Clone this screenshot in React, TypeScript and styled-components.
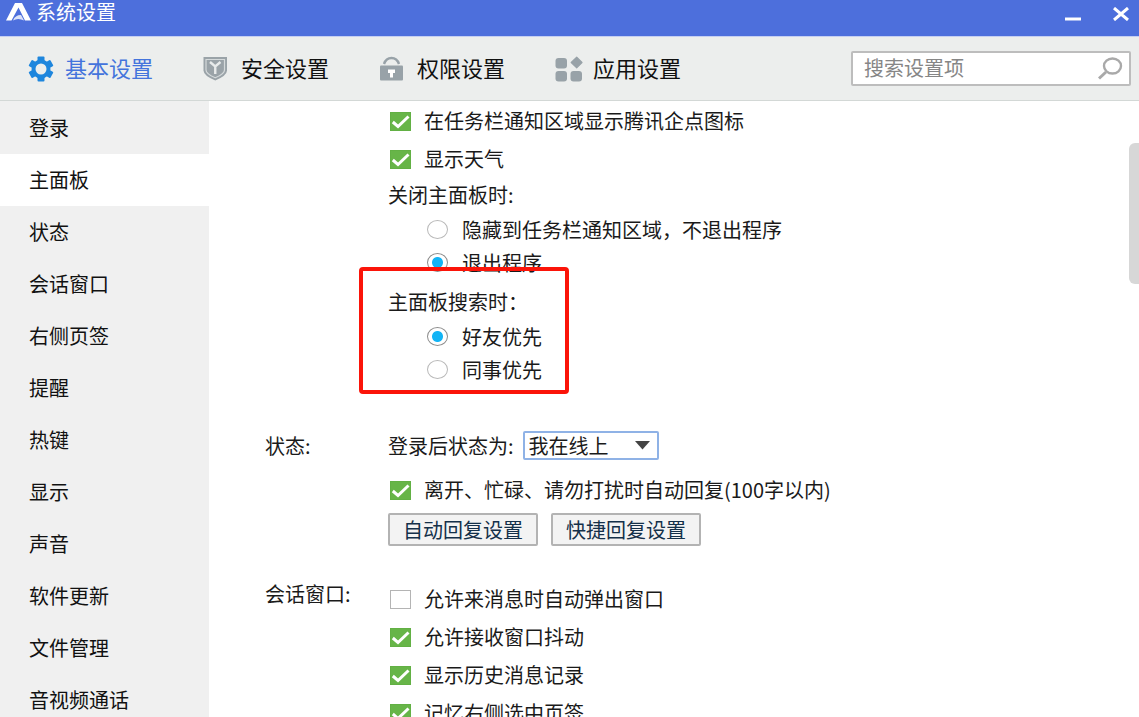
import React from "react";
import styled, { createGlobalStyle, css } from "styled-components";

const GlobalStyle = createGlobalStyle`
  *, *::before, *::after { box-sizing: border-box; }
  body {
    margin: 0;
    background: #fff;
    color: #1a1a1a;
    font-family: "Noto Sans CJK SC", sans-serif;
    font-size: 20px;
  }
  button, input, select { font: inherit; color: inherit; }
`;

const Window = styled.div`
  display: flex;
  flex-direction: column;
  height: 100vh;
  overflow: hidden;
`;

const TitleBar = styled.header`
  flex: none;
  display: flex;
  justify-content: space-between;
  height: 37px;
  padding: 0 6px;
  background: #4d6fdc;
  border-bottom: 1px solid #c5cff2;
  color: #fff;
`;

const Brand = styled.h1`
  display: flex;
  align-items: center;
  gap: 5px;
  height: 24px;
  margin: 0;
  font-size: 20px;
  font-weight: 400;
  line-height: 24px;
`;

const WindowButtons = styled.div`
  display: flex;
  gap: 24px;
  height: 28px;
`;

const WindowButton = styled.button`
  display: flex;
  align-items: center;
  justify-content: center;
  width: 24px;
  padding: 0;
  border: 0;
  background: none;
`;

const Toolbar = styled.div`
  flex: none;
  display: flex;
  align-items: center;
  justify-content: space-between;
  height: 64px;
  padding: 0 8px 0 27px;
  background: #eceeed;
  border-bottom: 1px solid #d3d8d6;
`;

const Tabs = styled.nav`
  display: flex;
  gap: 48px;
`;

const Tab = styled.button<{ $active?: boolean }>`
  display: flex;
  align-items: flex-start;
  gap: 10px;
  width: 128px;
  padding: 0;
  border: 0;
  background: none;
  font-size: 22px;
  line-height: 22px;
  white-space: nowrap;
  color: ${(p) => (p.$active ? "#4474dc" : "#111")};
  svg { flex: none; }
`;

const SearchBox = styled.label`
  display: flex;
  align-items: center;
  width: 280px;
  height: 35px;
  padding: 0 6px 0 11px;
  border: 2px solid #bdbdbd;
  border-radius: 2px;
  background: #fff;
`;

const SearchInput = styled.input`
  flex: 1;
  min-width: 0;
  height: 31px;
  padding: 0 0 3px;
  border: 0;
  outline: 0;
  background: none;
  &::placeholder { color: #868686; opacity: 1; }
`;

const Body = styled.div`
  flex: 1;
  display: flex;
  min-height: 0;
`;

const Sidebar = styled.nav`
  flex: none;
  width: 209px;
  padding-top: 1px;
  background: #f0f0f0;
  overflow: hidden;
`;

const SideItem = styled.a<{ $active?: boolean }>`
  display: block;
  padding-left: 29px;
  line-height: 52px;
  color: #111;
  text-decoration: none;
  ${(p) => p.$active && css`background: #fff;`}
`;

const Content = styled.main`
  flex: 1;
  display: flex;
  flex-direction: column;
  gap: 34px;
  min-width: 0;
  padding: 1px 20px 0 56px;
  overflow: hidden;
`;

const Section = styled.section`
  flex: none;
  display: grid;
  grid-template-columns: 123px 1fr;
`;

const SectionTitle = styled.h2<{ $line: number }>`
  margin: 0;
  font-size: 20px;
  font-weight: 400;
  line-height: ${(p) => p.$line}px;
`;

const Group = styled.div`
  position: relative;
  margin-bottom: 6px;
  &:last-child { margin-bottom: 0; }
`;

const GroupTitle = styled.div`
  padding-bottom: 2px;
  line-height: 33px;
`;

const Highlight = styled.div`
  position: absolute;
  top: -18px;
  bottom: -8px;
  left: -29px;
  width: 210px;
  border: 4px solid #fb1409;
  border-radius: 4px;
  pointer-events: none;
`;

const CheckRow = styled.label`
  display: flex;
  align-items: center;
  gap: 13px;
  height: 38px;
  padding-left: 2px;
  white-space: nowrap;
`;

const Caption = styled.span`
  padding-bottom: 2px;
`;

const CheckMark = styled.span`
  display: grid;
  width: 21px;
  height: 19px;
  > * { grid-area: 1 / 1; }
  svg { pointer-events: none; }
`;

const CheckInput = styled.input`
  appearance: none;
  width: 21px;
  height: 19px;
  margin: 0;
  border: 1px solid #b4b4b4;
  background: #fff;
  &:checked { border-color: #62b044; background: #67b548; }
  & + svg { visibility: hidden; }
  &:checked + svg { visibility: visible; }
`;

const RadioRow = styled.label`
  display: flex;
  align-items: center;
  gap: 14px;
  height: 33px;
  padding-left: 39px;
  white-space: nowrap;
`;

const RadioInput = styled.input`
  appearance: none;
  width: 21px;
  height: 19px;
  margin: 0;
  border: 1px solid #b8b8b8;
  border-radius: 50%;
  background: #fff;
  &:checked {
    border-color: #8c8c8c;
    background: radial-gradient(circle, #12b4f5 5px, #fff 6px);
  }
`;

const StatusRow = styled.div`
  display: flex;
  align-items: center;
  gap: 9px;
  height: 51px;
`;

const SelectWrap = styled.span`
  position: relative;
  svg { position: absolute; right: 9px; top: 10px; pointer-events: none; }
`;

const Select = styled.select`
  appearance: none;
  display: block;
  width: 136px;
  height: 29px;
  padding: 0 28px 0 4px;
  border: 2px solid #8fb2e6;
  border-radius: 2px;
  background: #fff;
  line-height: 24px;
`;

const ButtonRow = styled.div`
  display: flex;
  gap: 13px;
  padding-top: 4px;
`;

const PushButton = styled.button`
  width: 150px;
  height: 33px;
  padding: 0;
  border: 2px solid #b3b3b3;
  border-radius: 2px;
  background: #f3f3f3;
  color: #14304a;
  line-height: 28px;
`;

const ScrollTrack = styled.div`
  flex: none;
  width: 10px;
  padding-top: 42px;
`;

const ScrollThumb = styled.div`
  height: 141px;
  border-radius: 6px 0 0 6px;
  background: #d7d7d7;
`;

function Check({ label, checked }: { label: string; checked?: boolean }) {
  return (
    <CheckRow>
      <CheckMark>
        <CheckInput type="checkbox" defaultChecked={checked} />
        <svg width="21" height="19" viewBox="0 0 21 19" aria-hidden="true">
          <path d="M2.8 10 L8 14.5 L18.5 4.5" fill="none" stroke="#fff" strokeWidth="3" />
        </svg>
      </CheckMark>
      <Caption>{label}</Caption>
    </CheckRow>
  );
}

function Radio({ name, label, checked }: { name: string; label: string; checked?: boolean }) {
  return (
    <RadioRow>
      <RadioInput type="radio" name={name} defaultChecked={checked} />
      {label}
    </RadioRow>
  );
}

const GearIcon = () => (
  <svg width="28" height="26" viewBox="0 0 28 26">
    <g fill="#1e86dd">
      {[0, 60, 120].map((a) => (
        <rect key={a} x="10.5" y="0.5" width="7" height="25" rx="1" transform={`rotate(${a} 14 13)`} />
      ))}
      <circle cx="14" cy="13" r="9.5" />
    </g>
    <circle cx="14" cy="13" r="5.5" fill="#eceeed" />
  </svg>
);

const ShieldIcon = () => (
  <svg width="28" height="26" viewBox="0 0 28 26">
    <path d="M0.5 1H24V14.500Q24 19.500 12.250 24.500Q0.500 19.500 0.500 14.500Z" fill="#9aa3a8" />
    <path d="M3 3.500H21.500V14Q21.500 18 12.250 21.800Q3 18 3 14Z" fill="none" stroke="#d5dadb" strokeWidth="1.2" />
    <path d="M7 6L12.250 10.500L17.500 6M12.250 10.500V18" fill="none" stroke="#e8ebeb" strokeWidth="2.400" />
  </svg>
);

const LockIcon = () => (
  <svg width="28" height="26" viewBox="0 0 28 26">
    <path d="M5 8Q7 2 12.500 2Q18 2 20 8" fill="none" stroke="#98a2a8" strokeWidth="2.400" />
    <rect x="1" y="9.500" width="23" height="15" rx="1" fill="#98a2a8" />
    <path d="M9 13.500H16V17H14V21.500H11V17H9Z" fill="#fff" />
  </svg>
);

const AppsIcon = () => (
  <svg width="28" height="26" viewBox="0 0 28 26">
    <g fill="#98a2a8">
      <rect x="0.5" y="2" width="11.500" height="10.500" rx="3" />
      <rect x="0.5" y="15" width="11.500" height="10.500" rx="3" />
      <rect x="15.500" y="15" width="11.500" height="10.500" rx="3" />
      <path d="M21.700 1.200L27 6.500L21.700 11.800L16.200 6.500Z" stroke="#98a2a8" strokeWidth="1.200" strokeLinejoin="round" />
    </g>
  </svg>
);

const SIDE = ["登录", "主面板", "状态", "会话窗口", "右侧页签", "提醒", "热键", "显示", "声音", "软件更新", "文件管理", "音视频通话"];

export default function App() {
  return (
    <>
      <GlobalStyle />
      <Window>
        <TitleBar>
          <Brand>
            <svg width="25" height="18" viewBox="0 0 25 18" fill="#fff">
              <path d="M0 17.500L9 0H16L25 17.500H19L12.500 4.500L5.500 17.500Z" />
              <path d="M7 17.500Q9 12 15 12L18 17.500Q12 14.500 7 17.500Z" opacity=".8" />
            </svg>
            系统设置
          </Brand>
          <WindowButtons>
            <WindowButton aria-label="最小化">
              <svg width="18" height="14" viewBox="0 0 18 14"><path d="M1 12H17" stroke="#fff" strokeWidth="3" /></svg>
            </WindowButton>
            <WindowButton aria-label="关闭">
              <svg width="16" height="14" viewBox="0 0 16 14"><path d="M1 1L15 13M15 1L1 13" stroke="#fff" strokeWidth="3" /></svg>
            </WindowButton>
          </WindowButtons>
        </TitleBar>
        <Toolbar>
          <Tabs>
            <Tab $active><GearIcon />基本设置</Tab>
            <Tab><ShieldIcon />安全设置</Tab>
            <Tab><LockIcon />权限设置</Tab>
            <Tab><AppsIcon />应用设置</Tab>
          </Tabs>
          <SearchBox>
            <SearchInput type="search" placeholder="搜索设置项" aria-label="搜索设置项" />
            <svg width="26" height="23" viewBox="0 0 26 23" fill="none" stroke="#a9a9a9">
              <ellipse cx="15.500" cy="9" rx="8.500" ry="7.500" strokeWidth="2.400" />
              <path d="M9 15L2 21.500" strokeWidth="3" />
            </svg>
          </SearchBox>
        </Toolbar>
        <Body>
          <Sidebar>
            {SIDE.map((item) => (
              <SideItem key={item} href="#" $active={item === "主面板"}>{item}</SideItem>
            ))}
          </Sidebar>
          <Content>
            <Section>
              <span />
              <div>
                <Check label="在任务栏通知区域显示腾讯企点图标" checked />
                <Check label="显示天气" checked />
                <Group role="radiogroup" aria-labelledby="close-title">
                  <GroupTitle id="close-title">关闭主面板时:</GroupTitle>
                  <Radio name="close" label="隐藏到任务栏通知区域，不退出程序" />
                  <Radio name="close" label="退出程序" checked />
                </Group>
                <Group role="radiogroup" aria-labelledby="search-title">
                  <GroupTitle id="search-title">主面板搜索时：</GroupTitle>
                  <Radio name="search" label="好友优先" checked />
                  <Radio name="search" label="同事优先" />
                  <Highlight />
                </Group>
              </div>
            </Section>
            <Section>
              <SectionTitle $line={52}>状态:</SectionTitle>
              <div>
                <StatusRow>
                  <label htmlFor="status">登录后状态为:</label>
                  <SelectWrap>
                    <Select id="status" defaultValue="我在线上">
                      <option>我在线上</option>
                    </Select>
                    <svg width="15" height="9" viewBox="0 0 15 9"><path d="M0 0H15L7.500 8.500Z" fill="#444" /></svg>
                  </SelectWrap>
                </StatusRow>
                <Check label="离开、忙碌、请勿打扰时自动回复(100字以内)" checked />
                <ButtonRow>
                  <PushButton>自动回复设置</PushButton>
                  <PushButton>快捷回复设置</PushButton>
                </ButtonRow>
              </div>
            </Section>
            <Section>
              <SectionTitle $line={28}>会话窗口:</SectionTitle>
              <div>
                <Check label="允许来消息时自动弹出窗口" />
                <Check label="允许接收窗口抖动" checked />
                <Check label="显示历史消息记录" checked />
                <Check label="记忆右侧选中页签" checked />
              </div>
            </Section>
          </Content>
          <ScrollTrack><ScrollThumb /></ScrollTrack>
        </Body>
      </Window>
    </>
  );
}
